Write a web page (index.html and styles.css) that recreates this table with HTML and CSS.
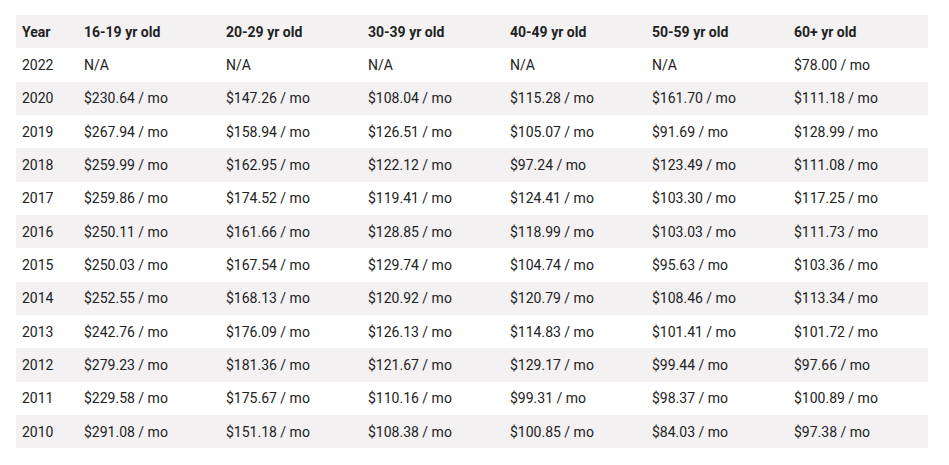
FILE: index.html
```html
<!DOCTYPE html>
<html>
<head>
<meta charset="utf-8">
<link rel="stylesheet" href="styles.css">
</head>
<body>
<div class="wrap">
<table class="rates">
<colgroup><col class="c-year"><col class="c"><col class="c"><col class="c"><col class="c"><col class="c"><col class="c-last"></colgroup>
<thead>
<tr><th>Year</th><th>16-19 yr old</th><th>20-29 yr old</th><th>30-39 yr old</th><th>40-49 yr old</th><th>50-59 yr old</th><th>60+ yr old</th></tr>
</thead>
<tbody>
<tr><td>2022</td><td>N/A</td><td>N/A</td><td>N/A</td><td>N/A</td><td>N/A</td><td>$78.00 / mo</td></tr>
<tr><td>2020</td><td>$230.64 / mo</td><td>$147.26 / mo</td><td>$108.04 / mo</td><td>$115.28 / mo</td><td>$161.70 / mo</td><td>$111.18 / mo</td></tr>
<tr><td>2019</td><td>$267.94 / mo</td><td>$158.94 / mo</td><td>$126.51 / mo</td><td>$105.07 / mo</td><td>$91.69 / mo</td><td>$128.99 / mo</td></tr>
<tr><td>2018</td><td>$259.99 / mo</td><td>$162.95 / mo</td><td>$122.12 / mo</td><td>$97.24 / mo</td><td>$123.49 / mo</td><td>$111.08 / mo</td></tr>
<tr><td>2017</td><td>$259.86 / mo</td><td>$174.52 / mo</td><td>$119.41 / mo</td><td>$124.41 / mo</td><td>$103.30 / mo</td><td>$117.25 / mo</td></tr>
<tr><td>2016</td><td>$250.11 / mo</td><td>$161.66 / mo</td><td>$128.85 / mo</td><td>$118.99 / mo</td><td>$103.03 / mo</td><td>$111.73 / mo</td></tr>
<tr><td>2015</td><td>$250.03 / mo</td><td>$167.54 / mo</td><td>$129.74 / mo</td><td>$104.74 / mo</td><td>$95.63 / mo</td><td>$103.36 / mo</td></tr>
<tr><td>2014</td><td>$252.55 / mo</td><td>$168.13 / mo</td><td>$120.92 / mo</td><td>$120.79 / mo</td><td>$108.46 / mo</td><td>$113.34 / mo</td></tr>
<tr><td>2013</td><td>$242.76 / mo</td><td>$176.09 / mo</td><td>$126.13 / mo</td><td>$114.83 / mo</td><td>$101.41 / mo</td><td>$101.72 / mo</td></tr>
<tr><td>2012</td><td>$279.23 / mo</td><td>$181.36 / mo</td><td>$121.67 / mo</td><td>$129.17 / mo</td><td>$99.44 / mo</td><td>$97.66 / mo</td></tr>
<tr><td>2011</td><td>$229.58 / mo</td><td>$175.67 / mo</td><td>$110.16 / mo</td><td>$99.31 / mo</td><td>$98.37 / mo</td><td>$100.89 / mo</td></tr>
<tr><td>2010</td><td>$291.08 / mo</td><td>$151.18 / mo</td><td>$108.38 / mo</td><td>$100.85 / mo</td><td>$84.03 / mo</td><td>$97.38 / mo</td></tr>
</tbody>
</table>
</div>
</body>
</html>
```
FILE: styles.css
```css
html, body { margin: 0; padding: 0; background: #fff; }
.wrap { padding: 15px 21px 0 16px; }
.rates {
  width: 912px;
  border-collapse: collapse;
  table-layout: fixed;
  font-family: Roboto, "Liberation Sans", sans-serif;
  font-size: 14px;
  color: #222;
}
.c-year { width: 62px; }
.c { width: 142px; }
.c-last { width: 140px; }
.rates th, .rates td {
  height: 33.34px;
  padding: 0 6px;
  text-align: left;
  vertical-align: middle;
  box-sizing: border-box;
  white-space: nowrap;
}
.rates th { font-weight: 700; }
.rates thead tr { background: #f3f1f2; }
.rates tbody tr:nth-child(even) { background: #f3f1f2; }
```
